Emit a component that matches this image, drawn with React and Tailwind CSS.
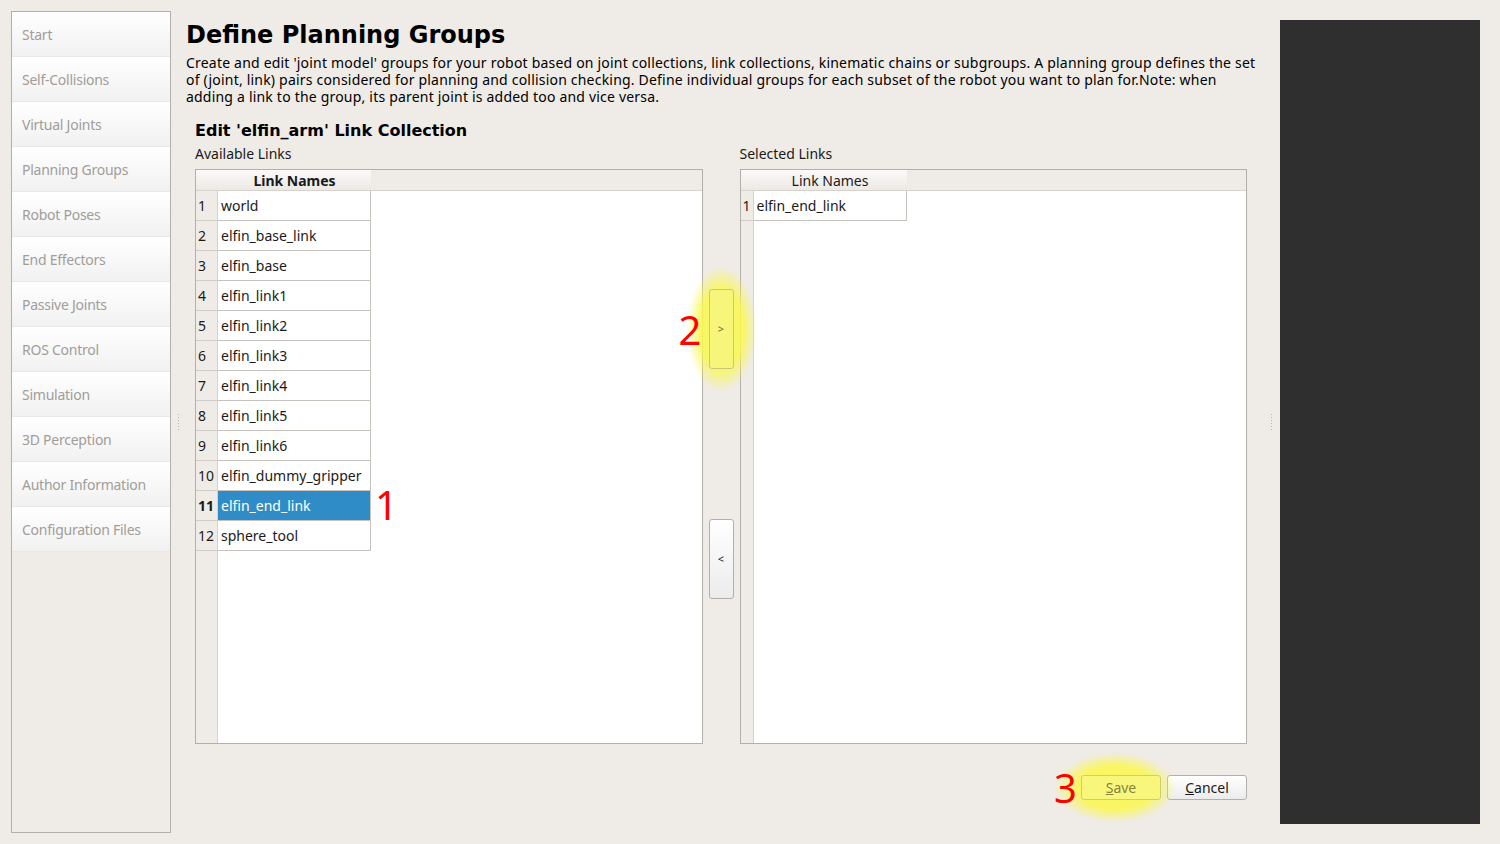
import React from 'react';

const steps = [
  'Start',
  'Self-Collisions',
  'Virtual Joints',
  'Planning Groups',
  'Robot Poses',
  'End Effectors',
  'Passive Joints',
  'ROS Control',
  'Simulation',
  '3D Perception',
  'Author Information',
  'Configuration Files',
];

const links = [
  'world',
  'elfin_base_link',
  'elfin_base',
  'elfin_link1',
  'elfin_link2',
  'elfin_link3',
  'elfin_link4',
  'elfin_link5',
  'elfin_link6',
  'elfin_dummy_gripper',
  'elfin_end_link',
  'sphere_tool',
];

const body = { fontFamily: '"Noto Sans", "Open Sans", sans-serif' };
const heading = { fontFamily: '"DejaVu Sans", sans-serif' };

function Splitter() {
  return (
    <div className="flex flex-col gap-[2px]">
      {[0, 1, 2, 3, 4, 5].map((i) => (
        <div key={i} className="w-[1px] h-[1px] bg-[#b8b4b0]" />
      ))}
    </div>
  );
}

function Marker({ children, className }) {
  return (
    <span
      className={`absolute text-[40px] leading-none text-[#ff0000] ${className}`}
      style={body}
    >
      {children}
    </span>
  );
}

function Glow({ className }) {
  return (
    <div
      className={`absolute rounded-full pointer-events-none ${className}`}
      style={{
        background:
          'radial-gradient(ellipse at center, rgba(250,248,80,0.95) 0%, rgba(250,248,80,0.85) 45%, rgba(250,248,80,0) 72%)',
      }}
    />
  );
}

function LinkTable({ rows, selected, boldHeader, numWidth }) {
  return (
    <div className="flex-1 flex flex-col border border-[#b3afaa] bg-white">
      <div className="flex h-[21px] border-b border-[#d6d2ce] bg-[#efebe7]">
        <div
          className="bg-gradient-to-b from-[#fbfaf9] to-[#ece9e5]"
          style={{ width: numWidth }}
        />
        <div
          className={`w-[153px] flex items-center justify-center text-[14px] text-[#1a1a1a] bg-gradient-to-b from-[#fbfaf9] to-[#ece9e5] ${
            boldHeader ? 'font-bold' : ''
          }`}
          style={body}
        >
          Link Names
        </div>
      </div>
      <div className="flex flex-1">
        <div
          className="flex flex-col bg-[#efebe7] border-r border-[#d6d2ce]"
          style={{ width: numWidth }}
        >
          {rows.map((r, i) => (
            <div
              key={r}
              className={`h-[30px] flex items-center pl-[2px] text-[14px] text-[#1a1a1a] border-b border-[#cfcbc7] ${
                i === selected ? 'font-bold' : ''
              }`}
              style={body}
            >
              {i + 1}
            </div>
          ))}
        </div>
        <div className="flex flex-col">
          {rows.map((r, i) => (
            <div
              key={r}
              className={`relative w-[153px] h-[30px] flex items-center pl-[3px] text-[14px] border-b border-r border-[#c6c2be] ${
                i === selected ? 'bg-[#308cc6] text-white' : 'text-[#1a1a1a]'
              }`}
              style={body}
            >
              {r}
              {i === selected && <Marker className="left-[157px] top-[-6px]">1</Marker>}
            </div>
          ))}
        </div>
      </div>
    </div>
  );
}

export default function App() {
  return (
    <div className="w-[1500px] h-[844px] flex bg-[#efebe7] text-[#1a1a1a] overflow-hidden" style={body}>
      {/* Sidebar */}
      <div className="pl-[11px] py-[11px]">
        <div className="w-[160px] h-full border border-[#b3afaa] bg-[#efebe7] flex flex-col">
          {steps.map((s) => (
            <div
              key={s}
              className="h-[45px] flex items-center pl-[10px] text-[14px] tracking-[-0.25px] text-[#a19d99] bg-gradient-to-b from-white to-[#f1f1f1] border-b border-[#e8e8e8]"
            >
              {s}
            </div>
          ))}
        </div>
      </div>

      <div className="w-[15px] flex items-center justify-center">
        <Splitter />
      </div>

      {/* Main */}
      <div className="flex-1 flex flex-col pt-[21px] pb-[44px]">
        <h1 className="text-[24px] leading-[28px] font-bold text-black" style={heading}>
          Define Planning Groups
        </h1>
        <p className="mt-[5px] text-[14px] leading-[17px] tracking-[0.2px] text-black">
          Create and edit 'joint model' groups for your robot based on joint collections, link collections, kinematic chains or subgroups. A planning group defines the set
          <br />
          of (joint, link) pairs considered for planning and collision checking. Define individual groups for each subset of the robot you want to plan for.Note: when
          <br />
          adding a link to the group, its parent joint is added too and vice versa.
        </p>

        <div className="flex-1 flex flex-col pl-[9px] pr-[15px] mt-[16px]">
          <h2 className="text-[16px] leading-[20px] font-bold text-black" style={heading}>
            Edit 'elfin_arm' Link Collection
          </h2>

          <div className="flex-1 flex">
            <div className="flex-1 flex flex-col">
              <div className="h-[25px] mb-[3px] text-[14px] flex items-center">Available Links</div>
              <LinkTable rows={links} selected={10} boldHeader numWidth="22px" />
            </div>

            <div className="w-[37px] flex flex-col items-center pt-[148px]">
              <div className="relative">
                <Glow className="-left-[22px] -right-[22px] -top-[22px] -bottom-[22px]" />
                <Marker className="-left-[30px] top-[21px]">2</Marker>
                <button className="relative w-[25px] h-[80px] rounded-[3px] border border-[#c9c87a] bg-[#f7f57a] text-[11px] text-[#6f6e2c]">
                  &gt;
                </button>
              </div>
              <button className="mt-[150px] w-[25px] h-[80px] rounded-[3px] border border-[#b3afaa] bg-gradient-to-b from-white to-[#ececec] text-[11px] text-[#1a1a1a]">
                &lt;
              </button>
            </div>

            <div className="flex-1 flex flex-col">
              <div className="h-[25px] mb-[3px] text-[14px] flex items-center">Selected Links</div>
              <LinkTable rows={['elfin_end_link']} selected={-1} numWidth="13px" />
            </div>
          </div>

          <div className="flex justify-end gap-[6px] mt-[31px]">
            <div className="relative">
              <Glow className="-left-[26px] -right-[14px] -top-[22px] -bottom-[22px]" />
              <Marker className="-left-[27px] -top-[7px]">3</Marker>
              <button className="relative w-[80px] h-[25px] rounded-[3px] border border-[#cfcd74] bg-[#f8f77c] text-[14px] text-[#85843a]">
                <span className="underline">S</span>ave
              </button>
            </div>
            <button className="w-[80px] h-[25px] rounded-[3px] border border-[#b3afaa] bg-gradient-to-b from-white to-[#ececec] text-[14px] text-[#1a1a1a]">
              <span className="underline">C</span>ancel
            </button>
          </div>
        </div>
      </div>

      <div className="w-[18px] flex items-center justify-center">
        <Splitter />
      </div>

      <div className="w-[200px] my-[20px] mr-[20px] bg-[#2f2f2f]" />
    </div>
  );
}
